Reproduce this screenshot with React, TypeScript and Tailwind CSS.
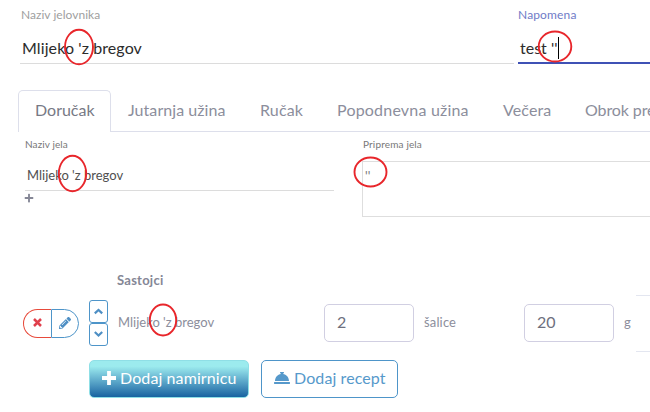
import { FaPencilAlt, FaPlus, FaConciergeBell } from "react-icons/fa";

const tabs = [
  { label: "Jutarnja užina", cls: "w-[131px] pl-[17px] tracking-[0.06px]" },
  { label: "Ručak", cls: "w-[77px] pl-[18px] tracking-[0.15px]" },
  { label: "Popodnevna užina", cls: "w-[166px] pl-[18px] tracking-[0.2px]" },
  { label: "Večera", cls: "w-[82px] pl-[18px] tracking-[0.1px]" },
  { label: "Obrok pre", cls: "w-[120px] pl-[18px] tracking-[-0.1px]" },
];

const marks = [
  { cx: 79, cy: 47, rx: 14, ry: 17.3 },
  { cx: 555, cy: 46.5, rx: 16.3, ry: 15 },
  { cx: 72.5, cy: 173.5, rx: 13.7, ry: 17.7 },
  { cx: 370.5, cy: 172, rx: 16, ry: 14.5 },
  { cx: 163, cy: 320, rx: 13.2, ry: 15.5 },
];

function Header() {
  return (
    <div className="flex h-[64px] shrink-0 gap-[4px] pl-[20px]">
      <div className="flex w-[494px] shrink-0 flex-col border-b border-[#dcdcdc]">
        <span className="mt-[7px] h-[16px] pl-px text-[12px] leading-[16px] tracking-[0.03px] text-[#a0a0a0]">Naziv jelovnika</span>
        <span className="mt-[15px] pl-[2px] text-[16px] leading-[20px] tracking-[0.1px] text-[#2c2c2c]">Mlijeko 'z bregov</span>
      </div>
      <div className="flex w-[140px] shrink-0 flex-col border-b-2 border-[#3f51b5]">
        <span className="mt-[7px] h-[16px] text-[12px] leading-[16px] tracking-[0.15px] text-[#6f7bc7]">Napomena</span>
        <div className="mt-[14px] flex pl-[2px]">
          <span className="w-[38px] pt-px text-[16px] leading-[20px] text-[#2c2c2c]">test ''</span>
          <span className="h-[22px] w-px bg-black" />
        </div>
      </div>
    </div>
  );
}

function Tabs() {
  return (
    <div className="mt-[26px] flex h-[42px] shrink-0 pl-[18px] text-[16px] leading-[20px] text-[#8c8e9c]">
      <div className="w-[93px] shrink-0 rounded-t-[5px] border border-b-0 border-[#dddfeb] pt-[9px] pl-[16px] text-[#777985]">
        Doručak
      </div>
      {tabs.map((t) => (
        <div key={t.label} className={`shrink-0 border-b border-[#dddfeb] pt-[10px] ${t.cls}`}>
          {t.label}
        </div>
      ))}
    </div>
  );
}

function Meal() {
  return (
    <div className="flex h-[85px] shrink-0 gap-[28px] pl-[25px]">
      <div className="w-[309px] shrink-0">
        <div className="h-[59px] border-b border-[#dcdcdc] pt-[5px]">
          <div className="text-[10px] leading-[14px] tracking-[0.1px] text-[#777]">Naziv jela</div>
          <div className="mt-[16px] pl-[2px] text-[13px] leading-[16px] text-[#505050]">Mlijeko 'z bregov</div>
        </div>
        <FaPlus className="mt-[2px] -ml-px size-[10px] text-[#858796]" />
      </div>
      <div className="w-[300px] shrink-0 pt-[5px]">
        <div className="pl-px text-[10px] leading-[14px] tracking-[0.15px] text-[#777]">Priprema jela</div>
        <div className="mt-[10px] h-[56px] border border-[#dedede] pt-[6px] pl-[2px] text-[13px] leading-[16px] text-[#777]">''</div>
      </div>
    </div>
  );
}

function Ingredients() {
  return (
    <>
      <div className="mt-[55px] h-[17px] shrink-0 pl-[117px] text-[13px] leading-[16px] font-bold tracking-[0.25px] text-[#858796]">Sastojci</div>
      <div className="mt-[6px] flex h-[57px] shrink-0 pl-[23px] text-[13px] leading-[16px] text-[#8c8e9c]">
        <div className="mt-[14px] flex h-[29px] w-[56px] shrink-0">
          <div className="flex w-[28px] items-center justify-center rounded-l-full border border-r-0 border-[#e74a3b] pb-[2px]">
            <svg className="size-[9px]" viewBox="0 0 9 9" stroke="#e0404c" strokeWidth="2.5">
              <path d="M1 1L8 8M8 1L1 8" />
            </svg>
          </div>
          <div className="flex w-[28px] items-center justify-center rounded-r-full border border-[#4e95c9] pb-[2px] text-[#4e8fc4]">
            <FaPencilAlt className="size-[12px]" />
          </div>
        </div>
        <div className="mt-[5px] ml-[10px] flex w-[19px] shrink-0 flex-col">
          <div className="flex h-[23px] items-center justify-center rounded-[3px] border border-[#4e95c9]">
            <svg className="h-[7px] w-[9px]" viewBox="0 0 9 7" fill="none" stroke="#4e8fc4" strokeWidth="2.2">
              <path d="M0.8 5.4L4.5 1.9L8.2 5.4" />
            </svg>
          </div>
          <div className="flex h-[23px] items-center justify-center rounded-[3px] border border-[#4e95c9]">
            <svg className="h-[7px] w-[9px]" viewBox="0 0 9 7" fill="none" stroke="#4e8fc4" strokeWidth="2.2">
              <path d="M0.8 1L4.5 4.5L8.2 1" />
            </svg>
          </div>
        </div>
        <span className="mt-[19px] ml-[10px] w-[206px] shrink-0">Mlijeko 'z bregov</span>
        <div className="mt-[9px] flex h-[38px] w-[90px] shrink-0 items-center rounded-[5px] border border-[#d1cfe2] pb-[2px] pl-[12px] text-[16px] text-[#6e707e]">2</div>
        <span className="mt-[19px] ml-[10px] w-[100px] shrink-0 tracking-[0.15px]">šalice</span>
        <div className="mt-[9px] flex h-[38px] w-[90px] shrink-0 items-center rounded-[5px] border border-[#d1cfe2] pb-[2px] pl-[12px] text-[16px] text-[#6e707e]">20</div>
        <span className="mt-[19px] ml-[10px] w-[12px] shrink-0">g</span>
        <div className="w-[20px] shrink-0 border-y border-[#e3e6f0]" />
      </div>
      <div className="mt-[8px] flex h-[38px] shrink-0 gap-[12px] pl-[89px] text-[16px] leading-[20px]">
        <div className="flex w-[160px] items-center rounded-[5px] border border-[#8fdfe6] bg-linear-to-b from-[#9cebee] from-15% to-[#1763a1] pb-[2px] pl-[12px] text-white">
          <svg className="size-[14px]" viewBox="0 0 14 14" stroke="currentColor" strokeWidth="3.8" strokeLinecap="butt">
            <path d="M7 0V14M0 7H14" />
          </svg>
          <span className="ml-[4px] tracking-[0.1px]">Dodaj namirnicu</span>
        </div>
        <div className="flex w-[137px] items-center rounded-[5px] border border-[#4e95c9] pb-[2px] pl-[12px] text-[#5699cb]">
          <FaConciergeBell className="size-[16px]" />
          <span className="ml-[4px] tracking-[0.1px]">Dodaj recept</span>
        </div>
      </div>
    </>
  );
}

export default function App() {
  return (
    <div className="relative flex h-[412px] w-[650px] flex-col overflow-hidden bg-white font-['Lato','Noto_Sans',sans-serif] whitespace-nowrap">
      <Header />
      <Tabs />
      <Meal />
      <Ingredients />
      <svg className="pointer-events-none absolute inset-0" width="650" height="412" fill="none" stroke="#e8262b" strokeWidth="1.9">
        {marks.map((m) => (
          <ellipse key={m.cx} {...m} />
        ))}
      </svg>
    </div>
  );
}
